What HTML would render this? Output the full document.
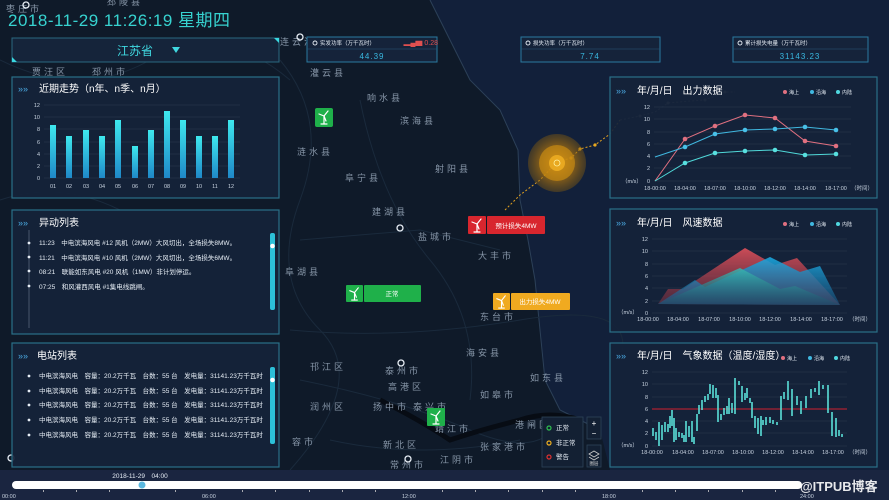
<!DOCTYPE html>
<html><head><meta charset="utf-8"><style>
html,body{margin:0;padding:0;background:#0e1726;width:889px;height:500px;overflow:hidden}
svg{display:block}
text{font-family:"Liberation Sans","Noto Sans CJK SC",sans-serif}
.m{fill:#8796a8;font-family:"Liberation Serif","Noto Serif CJK SC",serif;font-size:9px;letter-spacing:3px}
.ax{fill:#c8d3e0;font-size:5.5px}
.li{fill:#e6edf5;font-size:6.5px}
.tt{fill:#ffffff;font-size:10px}
</style></head><body>
<svg width="889" height="500" viewBox="0 0 889 500" xmlns="http://www.w3.org/2000/svg">
<defs>
<linearGradient id="bar" x1="0" y1="0" x2="0" y2="1"><stop offset="0" stop-color="#3ee8ee"/><stop offset="1" stop-color="#1f88c8"/></linearGradient>
<linearGradient id="pr" x1="0" y1="0" x2="0" y2="1"><stop offset="0" stop-color="#e0505a"/><stop offset="1" stop-color="#7a3040" stop-opacity=".6"/></linearGradient>
<linearGradient id="pb" x1="0" y1="0" x2="0" y2="1"><stop offset="0" stop-color="#1aa8e0"/><stop offset="1" stop-color="#1a5a88" stop-opacity=".6"/></linearGradient>
<linearGradient id="pc" x1="0" y1="0" x2="0" y2="1"><stop offset="0" stop-color="#3ab8b0"/><stop offset="1" stop-color="#1a4a68" stop-opacity=".6"/></linearGradient>
<radialGradient id="ty"><stop offset="0" stop-color="#f0b020"/><stop offset=".35" stop-color="#d08a10" stop-opacity=".9"/><stop offset=".7" stop-color="#a8700c" stop-opacity=".7"/><stop offset="1" stop-color="#805a10" stop-opacity=".5"/></radialGradient>
<symbol id="tb" viewBox="0 0 18 18"><g stroke="#fff" stroke-width="1.2" fill="none" stroke-linecap="round"><line x1="9" y1="8" x2="9" y2="16"/><line x1="9" y1="8" x2="13" y2="3"/><line x1="9" y1="8" x2="4" y2="6"/><line x1="9" y1="8" x2="11" y2="13"/><line x1="6" y1="16" x2="12" y2="16"/></g></symbol>
</defs>
<rect width="889" height="500" fill="#0f1a29"/>
<path d="M505 0 L889 0 L889 470 L610 470 L600 430 L560 410 L545 380 L540 330 L535 280 L528 240 L520 200 L518 150 L500 110 L470 80 L450 40 L430 0Z" fill="#12203a"/>
<path d="M430 0 L450 40 L470 80 L500 110 L518 150 L520 200 L528 240 L535 280 L540 330 L545 380 L560 410 L600 430" fill="none" stroke="#2c4058" stroke-width="1"/>
<g stroke="#1a2a3c" stroke-width="1" fill="none">
<path d="M280 60 Q330 120 300 200 T320 330 T290 470"/><path d="M290 330 Q400 340 520 320 T620 360"/>
<path d="M300 380 Q400 400 470 430 T560 420"/><path d="M360 100 Q380 200 430 260 T470 400"/>
<path d="M300 240 L420 230 L500 250"/><path d="M330 440 Q420 460 520 440"/>
<path d="M0 60 Q80 100 150 60 T290 80"/><path d="M0 200 Q60 180 120 210"/>
</g>
<path d="M380 400 Q420 420 450 440 Q480 430 520 420 Q550 410 580 420" stroke="#070c14" stroke-width="5" fill="none"/>
<g class="m">
<text x="6" y="12">枣庄市</text><text x="107" y="5">邳陵县</text><text x="310" y="76">灌云县</text><text x="367" y="101">响水县</text>
<text x="400" y="124">滨海县</text><text x="297" y="155">涟水县</text><text x="345" y="181">阜宁县</text><text x="435" y="172">射阳县</text>
<text x="372" y="215">建湖县</text><text x="418" y="240">盐城市</text><text x="478" y="259">大丰市</text><text x="480" y="320">东台市</text>
<text x="466" y="356">海安县</text><text x="310" y="370">邗江区</text><text x="385" y="374">泰州市</text><text x="388" y="390">高港区</text>
<text x="530" y="381">如东县</text><text x="480" y="398">如皋市</text><text x="310" y="410">润州区</text><text x="373" y="410">扬中市</text>
<text x="413" y="410">泰兴市</text><text x="435" y="432">靖江市</text><text x="480" y="450">张家港市</text><text x="383" y="448">新北区</text>
<text x="440" y="463">江阴市</text><text x="390" y="468">常州市</text><text x="292" y="445">容市</text><text x="515" y="428">港闸区</text>
<text x="32" y="75">贾汪区</text><text x="92" y="75">邳州市</text><text x="285" y="275">阜湖县</text><text x="280" y="45">连云港市</text>
</g>
<g fill="none" stroke="#e8eef5" stroke-width="1.3"><circle cx="300" cy="37" r="3"/><circle cx="400" cy="228" r="3"/><circle cx="401" cy="363" r="3"/><circle cx="408" cy="459" r="3"/><circle cx="26" cy="5" r="3"/><circle cx="11" cy="458" r="3"/></g>
<polyline points="620,120 640,116 655,112 668,103 690,101 705,100 710,98 725,92 735,92" fill="none" stroke="#6a6a6a" stroke-width="1" stroke-dasharray="2,2"/>
<g fill="#777"><circle cx="640" cy="116" r="1.5"/><circle cx="668" cy="103" r="1.5"/><circle cx="705" cy="100" r="1.5"/><circle cx="725" cy="92" r="1.5"/></g>
<polyline points="505,210 520,195 540,180 557,162 571,158 580,149 595,145 610,134 620,120" fill="none" stroke="#e0a020" stroke-width="1" stroke-dasharray="2,2"/>
<g fill="#e8a820"><circle cx="571" cy="158" r="1.6"/><circle cx="580" cy="149" r="1.6"/><circle cx="595" cy="145" r="1.6"/></g>
<circle cx="557" cy="163" r="29" fill="url(#ty)" opacity=".85"/><circle cx="557" cy="163" r="18" fill="#c88a12" opacity=".7"/><circle cx="557" cy="163" r="8" fill="#e8a820"/><circle cx="557" cy="163" r="3" fill="none" stroke="#fff2a0" stroke-width=".8"/>
<g><rect x="315" y="108" width="18" height="19" rx="2" fill="#1fb04a"/><use href="#tb" x="315" y="108" width="18" height="18"/></g>
<g><rect x="468" y="216" width="18" height="18" rx="1" fill="#d8262e"/><rect x="487" y="216" width="58" height="18" rx="1" fill="#d8262e"/><text x="516" y="228" text-anchor="middle" fill="#fff" font-size="6.5">预计损失4MW</text><use href="#tb" x="468" y="216" width="18" height="18"/></g>
<g><rect x="346" y="285" width="17" height="17" rx="1" fill="#1fb04a"/><rect x="364" y="285" width="57" height="17" rx="1" fill="#1fb04a"/><text x="392" y="296" text-anchor="middle" fill="#fff" font-size="6.5">正常</text><use href="#tb" x="346" y="285" width="17" height="17"/></g>
<g><rect x="493" y="293" width="17" height="17" rx="1" fill="#f0aa20"/><rect x="511" y="293" width="59" height="17" rx="1" fill="#f0aa20"/><text x="540" y="304" text-anchor="middle" fill="#fff" font-size="6.5">出力损失4MW</text><use href="#tb" x="493" y="293" width="17" height="17"/></g>
<g><rect x="427" y="408" width="18" height="18" rx="1" fill="#1fb04a"/><use href="#tb" x="427" y="408" width="18" height="18"/></g>
<rect x="542" y="417" width="41" height="50" fill="#132033" stroke="#2e4458" stroke-width=".8"/>
<circle cx="549" cy="428" r="2" fill="none" stroke="#2ec050" stroke-width="1.2"/><text x="556" y="430" class="li" font-size="5.5">正常</text>
<circle cx="549" cy="443" r="2" fill="none" stroke="#f0b020" stroke-width="1.2"/><text x="556" y="445" class="li" font-size="5.5">非正常</text>
<circle cx="549" cy="457" r="2" fill="none" stroke="#e03030" stroke-width="1.2"/><text x="556" y="459" class="li" font-size="5.5">警告</text>
<rect x="587" y="417" width="14" height="22" fill="#132033" stroke="#2e4458" stroke-width=".8"/><text x="594" y="426" fill="#fff" font-size="8" text-anchor="middle">+</text><text x="594" y="436" fill="#fff" font-size="8" text-anchor="middle">−</text>
<rect x="587" y="445" width="14" height="22" fill="#132033" stroke="#2e4458" stroke-width=".8"/><path d="M589 454 L594 451 L599 454 L594 457Z M589 457 L594 460 L599 457" fill="none" stroke="#ccc" stroke-width=".8"/><text x="594" y="465" fill="#ddd" font-size="4.5" text-anchor="middle">图层</text>
<text x="8" y="26" fill="#37d3d0" font-size="17" font-family="Liberation Mono, monospace" letter-spacing="0.5">2018-11-29 11:26:19 <tspan font-family="Noto Sans CJK SC">星期四</tspan></text>
<rect x="12" y="38" width="267" height="24" fill="#15243a" stroke="#2a6880" stroke-width="1"/>
<path d="M12 57 L12 62 L17 62Z M279 38 L274 38 L279 43Z" fill="#3ad8e0"/>
<text x="135" y="55" fill="#40d8e0" font-size="12" text-anchor="middle">江苏省</text><path d="M172 47 L180 47 L176 53Z" fill="#40d8e0"/>
<g stroke="#2a7088" stroke-width="1.2" fill="#15233a" fill-opacity=".92">
<rect x="12" y="77" width="267" height="121"/><rect x="12" y="210" width="267" height="124"/><rect x="12" y="343" width="267" height="124"/>
<rect x="610" y="77" width="267" height="121"/><rect x="610" y="209" width="267" height="123"/><rect x="610" y="343" width="267" height="124"/>
</g>
<g fill="#4aa8e0" font-size="9"><text x="18" y="92">»»</text><text x="18" y="226">»»</text><text x="18" y="359">»»</text><text x="616" y="94">»»</text><text x="616" y="226">»»</text><text x="616" y="359">»»</text></g>
<text x="39" y="92" class="tt" font-size="9">近期走势（n年、n季、n月）</text>
<text x="39" y="226" class="tt">异动列表</text>
<text x="37" y="359" class="tt">电站列表</text>
<g stroke="#2a3a50" stroke-width=".5"><line x1="44" y1="105" x2="240" y2="105"/><line x1="44" y1="117" x2="240" y2="117"/><line x1="44" y1="129" x2="240" y2="129"/><line x1="44" y1="142" x2="240" y2="142"/><line x1="44" y1="154" x2="240" y2="154"/><line x1="44" y1="166" x2="240" y2="166"/><line x1="44" y1="178" x2="240" y2="178"/></g>
<g class="ax" text-anchor="end"><text x="40" y="107">12</text><text x="40" y="119">10</text><text x="40" y="131">8</text><text x="40" y="144">6</text><text x="40" y="156">4</text><text x="40" y="168">2</text><text x="40" y="180">0</text></g>
<g fill="url(#bar)">
<rect x="50" y="125" width="6" height="53"/><rect x="66" y="136" width="6" height="42"/><rect x="83" y="130" width="6" height="48"/><rect x="99" y="136" width="6" height="42"/><rect x="115" y="120" width="6" height="58"/><rect x="132" y="146" width="6" height="32"/><rect x="148" y="130" width="6" height="48"/><rect x="164" y="111" width="6" height="67"/><rect x="180" y="120" width="6" height="58"/><rect x="196" y="136" width="6" height="42"/><rect x="212" y="136" width="6" height="42"/><rect x="228" y="120" width="6" height="58"/>
</g>
<g class="ax" text-anchor="middle"><text x="53" y="188">01</text><text x="69" y="188">02</text><text x="86" y="188">03</text><text x="102" y="188">04</text><text x="118" y="188">05</text><text x="135" y="188">06</text><text x="151" y="188">07</text><text x="167" y="188">08</text><text x="183" y="188">09</text><text x="199" y="188">10</text><text x="215" y="188">11</text><text x="231" y="188">12</text></g>
<line x1="29" y1="230" x2="29" y2="328" stroke="#6a7a90" stroke-width=".6"/>
<g fill="#e6edf5"><circle cx="29" cy="243" r="1.4"/><circle cx="29" cy="257" r="1.4"/><circle cx="29" cy="271" r="1.4"/><circle cx="29" cy="286" r="1.4"/></g>
<g class="li"><text x="39" y="245">11:23　中电滨海风电 #12 风机（2MW）大风切出，全场损失8MW。</text><text x="39" y="260">11:21　中电滨海风电 #10 风机（2MW）大风切出，全场损失6MW。</text><text x="39" y="274">08:21　联能如东风电 #20 风机（1MW）非计划停运。</text><text x="39" y="289">07:25　和风灌西风电 #1集电线跳闸。</text></g>
<rect x="270" y="233" width="5" height="77" rx="2" fill="#2cc0d8"/><circle cx="272.5" cy="246" r="2.3" fill="#fff"/>
<g fill="#e6edf5"><circle cx="29" cy="376" r="1.4"/><circle cx="29" cy="391" r="1.4"/><circle cx="29" cy="405" r="1.4"/><circle cx="29" cy="420" r="1.4"/><circle cx="29" cy="435" r="1.4"/></g>
<g class="li"><text x="39" y="378">中电滨海风电　容量：20.2万千瓦　台数：55 台　发电量：31141.23万千瓦时</text><text x="39" y="393">中电滨海风电　容量：20.2万千瓦　台数：55 台　发电量：31141.23万千瓦时</text><text x="39" y="407">中电滨海风电　容量：20.2万千瓦　台数：55 台　发电量：31141.23万千瓦时</text><text x="39" y="422">中电滨海风电　容量：20.2万千瓦　台数：55 台　发电量：31141.23万千瓦时</text><text x="39" y="437">中电滨海风电　容量：20.2万千瓦　台数：55 台　发电量：31141.23万千瓦时</text></g>
<rect x="270" y="367" width="5" height="77" rx="2" fill="#2cc0d8"/><circle cx="272.5" cy="380" r="2.3" fill="#fff"/>
<g stroke="#2a7aa0" stroke-width="1" fill="#15233a"><rect x="307" y="37" width="130" height="25"/><rect x="521" y="37" width="139" height="25"/><rect x="733" y="37" width="135" height="25"/></g>
<g stroke="#2a5a78" stroke-width=".6"><line x1="307" y1="49" x2="437" y2="49"/><line x1="521" y1="49" x2="660" y2="49"/><line x1="733" y1="49" x2="868" y2="49"/></g>
<g fill="none" stroke="#e8eef5" stroke-width=".9"><circle cx="315" cy="43" r="2"/><circle cx="528" cy="43" r="2"/><circle cx="740" cy="43" r="2"/></g>
<g fill="#e6edf5" font-size="5.5"><text x="320" y="45">实发功率（万千瓦时）</text><text x="533" y="45">损失功率（万千瓦时）</text><text x="745" y="45">累计损失电量（万千瓦时）</text></g>
<text x="438" y="45" fill="#e05050" font-size="7" text-anchor="end">▂▄▆ 0.28</text>
<g fill="#39b8e0" font-size="8" text-anchor="middle" letter-spacing="1"><text x="372" y="59">44.39</text><text x="590" y="59">7.74</text><text x="800" y="59">31143.23</text></g>
<text x="637" y="94" class="tt">年/月/日　出力数据</text>
<g font-size="5" fill="#e6edf5"><circle cx="785" cy="92" r="2" fill="#e07080"/><text x="789" y="94">海上</text><circle cx="812" cy="92" r="2" fill="#40b8e0"/><text x="816" y="94">沿海</text><circle cx="838" cy="92" r="2" fill="#50d8e0"/><text x="842" y="94">内陆</text></g>
<g stroke="#2a3a50" stroke-width=".5"><line x1="654" y1="107" x2="851" y2="107"/><line x1="654" y1="119" x2="851" y2="119"/><line x1="654" y1="132" x2="851" y2="132"/><line x1="654" y1="144" x2="851" y2="144"/><line x1="654" y1="156" x2="851" y2="156"/><line x1="654" y1="168" x2="851" y2="168"/><line x1="654" y1="181" x2="851" y2="181"/></g>
<g class="ax" text-anchor="end"><text x="650" y="109">12</text><text x="650" y="121">10</text><text x="650" y="134">8</text><text x="650" y="146">6</text><text x="650" y="158">4</text><text x="650" y="170">2</text><text x="650" y="183">0</text></g>
<text x="622" y="183" class="ax">（m/s）</text>
<g class="ax" text-anchor="middle"><text x="655" y="190">18-00:00</text><text x="685" y="190">18-04:00</text><text x="715" y="190">18-07:00</text><text x="745" y="190">18-10:00</text><text x="775" y="190">18-12:00</text><text x="805" y="190">18-14:00</text><text x="836" y="190">18-17:00</text><text x="862" y="190">（时间）</text></g>
<polyline points="655,181 685,139 715,126 745,115 775,118 805,141 836,146" fill="none" stroke="#e07080" stroke-width="1"/>
<polyline points="655,157 685,147 715,134 745,130 775,129 805,127 836,130" fill="none" stroke="#40b8e0" stroke-width="1"/>
<polyline points="655,181 685,163 715,153 745,151 775,150 805,155 836,154" fill="none" stroke="#50d8d8" stroke-width="1"/>
<g fill="#e07080"><circle cx="685" cy="139" r="2.3"/><circle cx="715" cy="126" r="2.3"/><circle cx="745" cy="115" r="2.3"/><circle cx="775" cy="118" r="2.3"/><circle cx="805" cy="141" r="2.3"/><circle cx="836" cy="146" r="2.3"/></g>
<g fill="#48c0e8"><circle cx="685" cy="147" r="2.3"/><circle cx="715" cy="134" r="2.3"/><circle cx="745" cy="130" r="2.3"/><circle cx="775" cy="129" r="2.3"/><circle cx="805" cy="127" r="2.3"/><circle cx="836" cy="130" r="2.3"/></g>
<g fill="#58e0e0"><circle cx="685" cy="163" r="2.3"/><circle cx="715" cy="153" r="2.3"/><circle cx="745" cy="151" r="2.3"/><circle cx="775" cy="150" r="2.3"/><circle cx="805" cy="155" r="2.3"/><circle cx="836" cy="154" r="2.3"/></g>
<text x="637" y="226" class="tt">年/月/日　风速数据</text>
<g font-size="5" fill="#e6edf5"><circle cx="785" cy="224" r="2" fill="#e07080"/><text x="789" y="226">海上</text><circle cx="812" cy="224" r="2" fill="#40b8e0"/><text x="816" y="226">沿海</text><circle cx="838" cy="224" r="2" fill="#50d8e0"/><text x="842" y="226">内陆</text></g>
<g stroke="#2a3a50" stroke-width=".5"><line x1="652" y1="239" x2="847" y2="239"/><line x1="652" y1="251" x2="847" y2="251"/><line x1="652" y1="264" x2="847" y2="264"/><line x1="652" y1="276" x2="847" y2="276"/><line x1="652" y1="288" x2="847" y2="288"/><line x1="652" y1="301" x2="847" y2="301"/><line x1="652" y1="313" x2="847" y2="313"/></g>
<g class="ax" text-anchor="end"><text x="648" y="241">12</text><text x="648" y="253">10</text><text x="648" y="266">8</text><text x="648" y="278">6</text><text x="648" y="290">4</text><text x="648" y="303">2</text><text x="648" y="315">0</text></g>
<text x="618" y="314" class="ax">（m/s）</text>
<path d="M658 304 L668 289 L683 289 L745 248 L775 265 L797 258 L840 305 Z" fill="url(#pr)" opacity=".9"/>
<path d="M658 304 L695 280 L705 287 L770 257 L800 272 L820 266 L840 305 Z" fill="url(#pb)" opacity=".9"/>
<path d="M658 304 L740 268 L780 289 L795 286 L840 305 Z" fill="url(#pc)" opacity=".85"/>
<g class="ax" text-anchor="middle"><text x="648" y="321">18-00:00</text><text x="678" y="321">18-04:00</text><text x="709" y="321">18-07:00</text><text x="740" y="321">18-10:00</text><text x="770" y="321">18-12:00</text><text x="801" y="321">18-14:00</text><text x="832" y="321">18-17:00</text><text x="860" y="321">（时间）</text></g>
<text x="637" y="359" class="tt">年/月/日　气象数据（温度/湿度）</text>
<g font-size="5" fill="#e6edf5"><circle cx="783" cy="358" r="2" fill="#e07080"/><text x="787" y="360">海上</text><circle cx="810" cy="358" r="2" fill="#40b8e0"/><text x="814" y="360">沿海</text><circle cx="836" cy="358" r="2" fill="#50d8e0"/><text x="840" y="360">内陆</text></g>
<g stroke="#2a3a50" stroke-width=".5"><line x1="652" y1="372" x2="847" y2="372"/><line x1="652" y1="384" x2="847" y2="384"/><line x1="652" y1="397" x2="847" y2="397"/><line x1="652" y1="421" x2="847" y2="421"/><line x1="652" y1="433" x2="847" y2="433"/><line x1="652" y1="446" x2="847" y2="446"/></g>
<line x1="652" y1="409" x2="847" y2="409" stroke="#d02030" stroke-width="1"/>
<g class="ax" text-anchor="end"><text x="648" y="374">12</text><text x="648" y="386">10</text><text x="648" y="399">8</text><text x="648" y="411">6</text><text x="648" y="423">4</text><text x="648" y="435">2</text><text x="648" y="448">0</text></g>
<text x="618" y="447" class="ax">（m/s）</text>
<g stroke="#5ae0d8" stroke-width="1.6">
<line x1="653" y1="428" x2="653" y2="436"/><line x1="656" y1="432" x2="656" y2="440"/><line x1="659" y1="422" x2="659" y2="446"/><line x1="662" y1="425" x2="662" y2="440"/><line x1="665" y1="422" x2="665" y2="432"/><line x1="668" y1="424" x2="668" y2="432"/><line x1="670" y1="416" x2="670" y2="428"/><line x1="672" y1="410" x2="672" y2="426"/><line x1="674" y1="418" x2="674" y2="442"/><line x1="676" y1="428" x2="676" y2="440"/><line x1="679" y1="432" x2="679" y2="437"/><line x1="682" y1="433" x2="682" y2="438"/><line x1="684" y1="435" x2="684" y2="442"/><line x1="686" y1="421" x2="686" y2="442"/><line x1="689" y1="426" x2="689" y2="437"/><line x1="692" y1="421" x2="692" y2="442"/><line x1="694" y1="437" x2="694" y2="444"/><line x1="697" y1="414" x2="697" y2="431"/><line x1="699" y1="405" x2="699" y2="414"/><line x1="702" y1="400" x2="702" y2="410"/><line x1="705" y1="396" x2="705" y2="402"/><line x1="708" y1="394" x2="708" y2="400"/><line x1="710" y1="384" x2="710" y2="394"/><line x1="713" y1="385" x2="713" y2="398"/><line x1="716" y1="388" x2="716" y2="398"/><line x1="718" y1="395" x2="718" y2="422"/><line x1="721" y1="414" x2="721" y2="420"/><line x1="724" y1="408" x2="724" y2="415"/><line x1="727" y1="406" x2="727" y2="414"/><line x1="729" y1="398" x2="729" y2="414"/><line x1="732" y1="403" x2="732" y2="413"/><line x1="735" y1="378" x2="735" y2="414"/><line x1="739" y1="381" x2="739" y2="385"/><line x1="742" y1="386" x2="742" y2="402"/><line x1="745" y1="393" x2="745" y2="400"/><line x1="747" y1="388" x2="747" y2="398"/><line x1="750" y1="398" x2="750" y2="403"/><line x1="752" y1="402" x2="752" y2="418"/><line x1="755" y1="416" x2="755" y2="428"/><line x1="758" y1="418" x2="758" y2="434"/><line x1="761" y1="416" x2="761" y2="436"/><line x1="763" y1="420" x2="763" y2="425"/><line x1="766" y1="417" x2="766" y2="425"/><line x1="770" y1="417" x2="770" y2="423"/><line x1="773" y1="420" x2="773" y2="424"/><line x1="777" y1="422" x2="777" y2="425"/><line x1="781" y1="396" x2="781" y2="420"/><line x1="784" y1="392" x2="784" y2="399"/><line x1="788" y1="381" x2="788" y2="400"/><line x1="792" y1="389" x2="792" y2="416"/><line x1="797" y1="396" x2="797" y2="405"/><line x1="801" y1="401" x2="801" y2="414"/><line x1="806" y1="396" x2="806" y2="408"/><line x1="811" y1="389" x2="811" y2="398"/><line x1="815" y1="388" x2="815" y2="392"/><line x1="819" y1="381" x2="819" y2="395"/><line x1="823" y1="385" x2="823" y2="389"/><line x1="828" y1="385" x2="828" y2="413"/><line x1="832" y1="412" x2="832" y2="436"/><line x1="836" y1="418" x2="836" y2="437"/><line x1="839" y1="430" x2="839" y2="436"/><line x1="842" y1="434" x2="842" y2="437"/>
</g>
<g class="ax" text-anchor="middle"><text x="652" y="454">18-00:00</text><text x="683" y="454">18-04:00</text><text x="713" y="454">18-07:00</text><text x="743" y="454">18-10:00</text><text x="773" y="454">18-12:00</text><text x="803" y="454">18-14:00</text><text x="833" y="454">18-17:00</text><text x="860" y="454">（时间）</text></g>
<rect x="0" y="470" width="889" height="30" fill="#1a2540"/>
<rect x="12" y="481" width="790" height="8" rx="4" fill="#ffffff"/>
<circle cx="142" cy="485" r="3.5" fill="#5ab8e0"/>
<text x="140" y="478" fill="#e6edf5" font-size="6.5" text-anchor="middle">2018-11-29　04:00</text>
<g class="ax" font-size="6" fill="#e6edf5"><text x="2" y="498">00:00</text><text x="202" y="498">06:00</text><text x="402" y="498">12:00</text><text x="602" y="498">18:00</text><text x="800" y="498">24:00</text></g>
<g fill="#ccc"><rect x="43" y="490" width=".8" height="2"/><rect x="76" y="490" width=".8" height="2"/><rect x="109" y="490" width=".8" height="2"/><rect x="175" y="490" width=".8" height="2"/><rect x="242" y="490" width=".8" height="2"/><rect x="275" y="490" width=".8" height="2"/><rect x="309" y="490" width=".8" height="2"/><rect x="342" y="490" width=".8" height="2"/><rect x="375" y="490" width=".8" height="2"/><rect x="442" y="490" width=".8" height="2"/><rect x="475" y="490" width=".8" height="2"/><rect x="508" y="490" width=".8" height="2"/><rect x="542" y="490" width=".8" height="2"/><rect x="575" y="490" width=".8" height="2"/><rect x="642" y="490" width=".8" height="2"/><rect x="675" y="490" width=".8" height="2"/><rect x="708" y="490" width=".8" height="2"/><rect x="742" y="490" width=".8" height="2"/><rect x="775" y="490" width=".8" height="2"/></g>
<text x="800" y="491" fill="#ffffff" font-size="13" font-weight="bold" opacity=".9">@ITPUB博客</text>
</svg>
</body></html>
